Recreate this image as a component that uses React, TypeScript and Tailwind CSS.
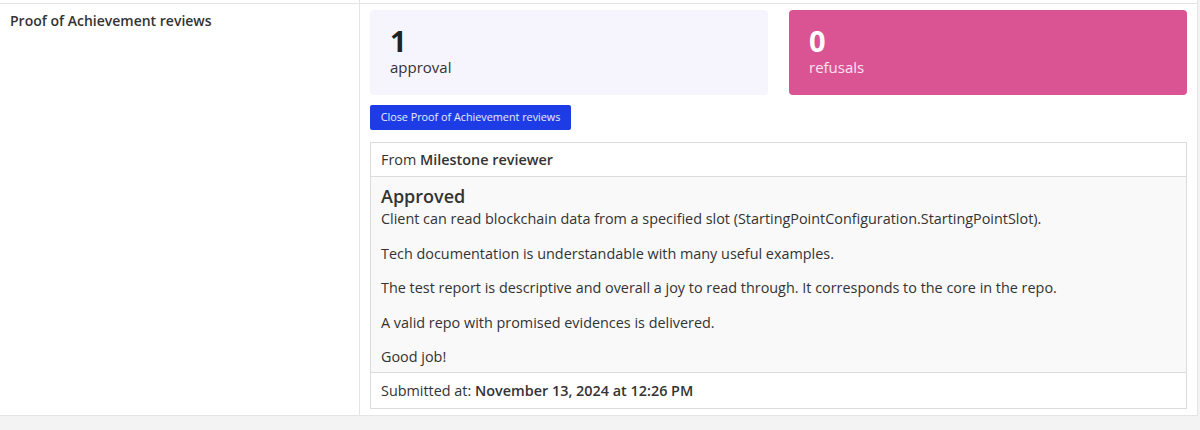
const PARAGRAPHS = [
  "Client can read blockchain data from a specified slot (StartingPointConfiguration.StartingPointSlot).",
  "Tech documentation is understandable with many useful examples.",
  "The test report is descriptive and overall a joy to read through. It corresponds to the core in the repo.",
  "A valid repo with promised evidences is delivered.",
  "Good job!",
];

export default function App() {
  return (
    <div
      className="w-[1200px] h-[430px] bg-[#f3f3f3] text-[#333] overflow-hidden"
      style={{ fontFamily: '"Open Sans", "Liberation Sans", sans-serif' }}
    >
      <div className="w-[1198px] bg-white border-r border-[#e4e4e4]">
        {/* previous row, cut off */}
        <div className="flex h-[3px]">
          <div className="w-[360px] border-r border-[#e4e4e4]" />
          <div className="flex-1" />
        </div>
        <div className="flex border-t border-b border-[#e4e4e4] h-[413px]">
          <div className="w-[360px] shrink-0 border-r border-[#e4e4e4] px-[10px] pt-[6px]">
            <h3 className="text-[14px] font-semibold text-[#333]">Proof of Achievement reviews</h3>
          </div>
          <div className="flex-1 pl-[10px] pr-[10px] pt-[6px]">
            <div className="grid grid-cols-2 gap-[21px]">
              <div className="rounded-[4px] bg-[#f6f4fd] h-[85px] px-[20px] pt-[16px]">
                <div className="text-[29px] font-bold leading-[30px] text-[#222]">1</div>
                <div className="text-[15px] leading-[22px] text-[#333]">approval</div>
              </div>
              <div className="rounded-[4px] bg-[#da5393] h-[85px] px-[20px] pt-[16px] text-white">
                <div className="text-[29px] font-bold leading-[30px]">0</div>
                <div className="text-[15px] leading-[22px] text-white/85">refusals</div>
              </div>
            </div>
            <button className="mt-[10px] h-[25px] w-[201px] rounded-[2px] bg-[#1d3ce6] text-[10.8px] text-white/90">
              Close Proof of Achievement reviews
            </button>
            <div className="mt-[12px] border border-[#dcdcdc] text-[14.4px]">
              <div className="h-[34px] flex items-center px-[10px] bg-white border-b border-[#dcdcdc]">
                <span>From&nbsp;</span>
                <span className="font-semibold">Milestone reviewer</span>
              </div>
              <div className="bg-[#f9f9f9] px-[10px] pt-[7px] pb-[5px] border-b border-[#dcdcdc]">
                <h4 className="text-[18px] font-semibold leading-[24px]">Approved</h4>
                {PARAGRAPHS.map((p) => (
                  <p key={p} className="leading-[21px] mb-[13.5px] last:mb-0">{p}</p>
                ))}
              </div>
              <div className="h-[35px] flex items-center px-[10px] bg-white">
                <span>Submitted at:&nbsp;</span>
                <span className="font-semibold">November 13, 2024 at 12:26 PM</span>
              </div>
            </div>
          </div>
        </div>
      </div>
    </div>
  );
}
